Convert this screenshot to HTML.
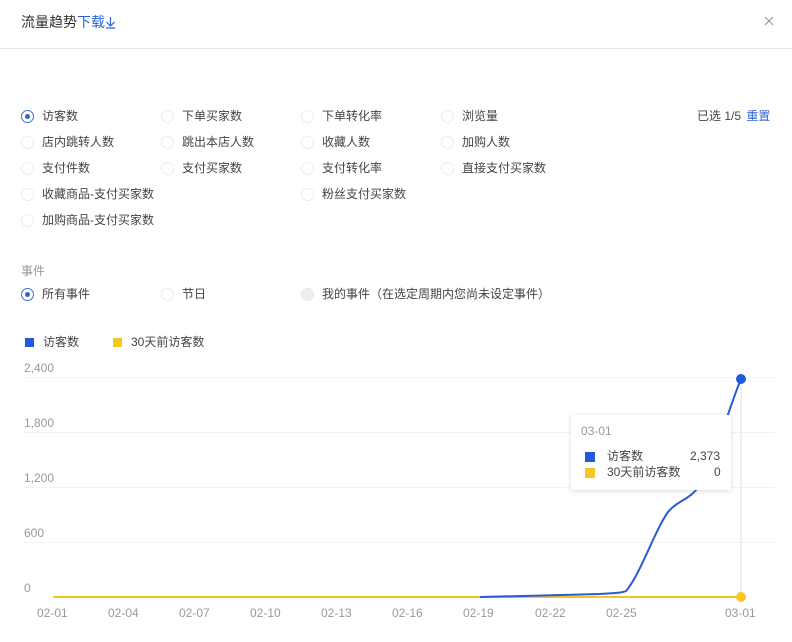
<!DOCTYPE html>
<html><head><meta charset="utf-8"><style>
*{margin:0;padding:0;box-sizing:border-box}
body{width:792px;height:642px;background:#fff;position:relative;overflow:hidden;font-family:"Liberation Sans","Noto Sans CJK SC",sans-serif;font-size:12px;color:#444}
.a{position:absolute;white-space:nowrap;line-height:14px}
.r{position:absolute;width:13px;height:13px;border:1px solid #ebebeb;border-radius:50%}
.r.on{border-color:#3b6fd6}
.r.on:after{content:"";position:absolute;left:3px;top:3px;width:5px;height:5px;border-radius:50%;background:#2f62d6}
.r.dis{background:#eee;border-color:#e8e8e8}
.g{color:#999}
</style></head><body>
<div class="a" style="left:21px;top:14px;font-size:14px;line-height:16px;color:#333">流量趋势<span style="color:#2f62d6">下载</span><svg width="11" height="14" style="vertical-align:-2px"><path d="M5.5 2v9M1.5 7l4 4 4-4M1 13h9" fill="none" stroke="#2f62d6" stroke-width="1.2"/></svg></div>
<svg style="position:absolute;left:764px;top:16px" width="10" height="10"><path d="M1 1l8 8M9 1l-8 8" stroke="#999" stroke-width="1.2"/></svg>
<div style="position:absolute;left:0;top:48px;width:792px;height:1px;background:#e8e8e8"></div>

<div class="r on" style="left:21px;top:110px"></div><div class="a" style="left:42px;top:109px">访客数</div>
<div class="r" style="left:161px;top:110px"></div><div class="a" style="left:182px;top:109px">下单买家数</div>
<div class="r" style="left:301px;top:110px"></div><div class="a" style="left:322px;top:109px">下单转化率</div>
<div class="r" style="left:441px;top:110px"></div><div class="a" style="left:462px;top:109px">浏览量</div>
<div class="a" style="left:697px;top:109px">已选 1/5 <span style="color:#2f62d6;margin-left:2px">重置</span></div>

<div class="r" style="left:21px;top:136px"></div><div class="a" style="left:42px;top:135px">店内跳转人数</div>
<div class="r" style="left:161px;top:136px"></div><div class="a" style="left:182px;top:135px">跳出本店人数</div>
<div class="r" style="left:301px;top:136px"></div><div class="a" style="left:322px;top:135px">收藏人数</div>
<div class="r" style="left:441px;top:136px"></div><div class="a" style="left:462px;top:135px">加购人数</div>

<div class="r" style="left:21px;top:162px"></div><div class="a" style="left:42px;top:161px">支付件数</div>
<div class="r" style="left:161px;top:162px"></div><div class="a" style="left:182px;top:161px">支付买家数</div>
<div class="r" style="left:301px;top:162px"></div><div class="a" style="left:322px;top:161px">支付转化率</div>
<div class="r" style="left:441px;top:162px"></div><div class="a" style="left:462px;top:161px">直接支付买家数</div>

<div class="r" style="left:21px;top:188px"></div><div class="a" style="left:42px;top:187px">收藏商品-支付买家数</div>
<div class="r" style="left:301px;top:188px"></div><div class="a" style="left:322px;top:187px">粉丝支付买家数</div>

<div class="r" style="left:21px;top:214px"></div><div class="a" style="left:42px;top:213px">加购商品-支付买家数</div>

<div class="a g" style="left:21px;top:264px">事件</div>
<div class="r on" style="left:21px;top:288px"></div><div class="a" style="left:42px;top:287px">所有事件</div>
<div class="r" style="left:161px;top:288px"></div><div class="a" style="left:182px;top:287px">节日</div>
<div class="r dis" style="left:301px;top:288px"></div><div class="a" style="left:322px;top:287px">我的事件（在选定周期内您尚未设定事件）</div>

<div style="position:absolute;left:25px;top:338px;width:9px;height:9px;background:#2159dc"></div><div class="a" style="left:43px;top:335px">访客数</div>
<div style="position:absolute;left:113px;top:338px;width:9px;height:9px;background:#f5c722"></div><div class="a" style="left:131px;top:335px">30天前访客数</div>

<div class="a g" style="left:24px;top:361px">2,400</div>
<div class="a g" style="left:24px;top:416px">1,800</div>
<div class="a g" style="left:24px;top:471px">1,200</div>
<div class="a g" style="left:24px;top:526px">600</div>
<div class="a g" style="left:24px;top:581px">0</div>

<svg style="position:absolute;left:0;top:0" width="792" height="642">
<g stroke="#f2f2f2" stroke-width="1">
<line x1="24" y1="377.5" x2="774" y2="377.5"/><line x1="24" y1="432.5" x2="774" y2="432.5"/>
<line x1="24" y1="487.5" x2="774" y2="487.5"/><line x1="24" y1="542.5" x2="774" y2="542.5"/>
</g>
<line x1="741" y1="379" x2="741" y2="597" stroke="#e0e0e0"/>
<line x1="53" y1="597" x2="741" y2="597" stroke="#f2c523" stroke-width="2"/>
<path d="M480 597 C530 596 560 595 600 594 C615 593 622 593 626 591 C640 575 655 530 668 512 C678 500 690 500 700 485 C715 460 728 410 741 379" fill="none" stroke="#2a5bd0" stroke-width="2"/>
<circle cx="741" cy="379" r="5" fill="#2159dc"/>
<circle cx="741" cy="597" r="5" fill="#f5c722"/>
</svg>

<div style="position:absolute;left:571px;top:415px;width:160px;height:75px;background:#fff;box-shadow:0 1px 5px rgba(0,0,0,.15)"></div>
<div class="a g" style="left:581px;top:424px;font-size:12px">03-01</div>
<div style="position:absolute;left:585px;top:452px;width:10px;height:10px;background:#2159dc"></div>
<div class="a" style="left:607px;top:449px">访客数</div><div class="a" style="left:690px;top:449px">2,373</div>
<div style="position:absolute;left:585px;top:468px;width:10px;height:10px;background:#f5c722"></div>
<div class="a" style="left:607px;top:465px">30天前访客数</div><div class="a" style="left:714px;top:465px">0</div>

<div class="a g" style="left:37px;top:606px">02-01</div>
<div class="a g" style="left:108px;top:606px">02-04</div>
<div class="a g" style="left:179px;top:606px">02-07</div>
<div class="a g" style="left:250px;top:606px">02-10</div>
<div class="a g" style="left:321px;top:606px">02-13</div>
<div class="a g" style="left:392px;top:606px">02-16</div>
<div class="a g" style="left:463px;top:606px">02-19</div>
<div class="a g" style="left:535px;top:606px">02-22</div>
<div class="a g" style="left:606px;top:606px">02-25</div>
<div class="a g" style="left:725px;top:606px">03-01</div>
</body></html>
